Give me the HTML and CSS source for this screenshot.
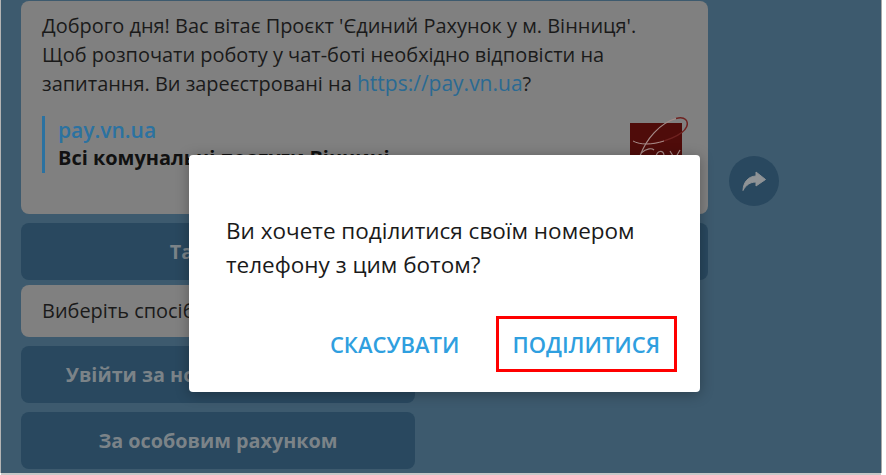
FILE: index.html
```html
<!DOCTYPE html>
<html lang="uk">
<head>
<meta charset="utf-8">
<title>Чат-бот</title>
<link rel="stylesheet" href="styles.css">
</head>
<body>
<div class="screen">
  <div class="chat">
    <div class="row">
      <div class="bubble">
        <p class="msg">Доброго дня! Вас вітає Проєкт 'Єдиний Рахунок у м. Вінниця'.<br>Щоб розпочати роботу у чат-боті необхідно відповісти на<br>запитання. Ви зареєстровані на <span class="link">https://pay.vn.ua</span>?</p>
        <div class="preview">
          <div class="preview-text">
            <div class="site">pay.vn.ua</div>
            <div class="desc">Всі комунальні послуги Вінниці</div>
          </div>
          <svg class="logo" width="58" height="40" viewBox="0 0 58 40">
            <rect x="0" y="6" width="52" height="34" fill="#4f0c0a"/>
            <path d="M46 1.500C55 -1 59 4 56.500 10C53 18 34 26 16 27" fill="none" stroke="#6f2220" stroke-width="1.500"/>
            <path d="M10 39C16 22 30 6 46 1.500" fill="none" stroke="#a58b88" stroke-width="1.200"/>
            <path d="M3 24C10 28 22 28 34 24" fill="none" stroke="#a58b88" stroke-width="1"/>
            <path d="M11 36C17 31 22 31 24 33M26 40C27 33 33 33 34 38M40 34L43 39M50 33L46 40" fill="none" stroke="#a58b88" stroke-width="1.200"/>
          </svg>
        </div>
      </div>
      <div class="share">
        <svg width="24" height="20" viewBox="0 0 24 20"><path d="M14 1L23.500 8.500L14 15V11C8 11 4 14 1 19.500C1.500 11 6 5.500 14 5Z" fill="#8f9396" stroke="#8f9396" stroke-linejoin="round"/></svg>
      </div>
    </div>
    <button class="kbd kbd-wide">Так, я зареєстрований(а) на pay.vn.ua</button>
    <div class="bubble-small">Виберіть спосіб авторизації у чат-боті</div>
    <button class="kbd kbd-half">Увійти за номером телефону</button>
    <button class="kbd kbd-half">За особовим рахунком</button>
  </div>
  <div class="modal">
    <p class="modal-text">Ви хочете поділитися своїм номером телефону з цим ботом?</p>
    <div class="actions">
      <span class="action">СКАСУВАТИ</span>
      <span class="action action-marked">ПОДІЛИТИСЯ</span>
    </div>
  </div>
</div>
</body>
</html>
```
FILE: styles.css
```css
* { box-sizing: border-box; }
html, body { margin: 0; height: 100%; background: #fff; }
body { overflow: hidden; font-family: "Open Sans", sans-serif; }
.screen {
  position: relative;
  width: 880px;
  height: 473px;
  margin-left: 1px;
  background: #3d5a6e;
  box-shadow: -1px 0 0 #b4b4b4, 1px 0 0 #a8a8a8, 0 2px 0 #c8c8c8;
}
.chat {
  display: flex;
  flex-direction: column;
  align-items: flex-start;
  height: 100%;
  padding: 1px 0 0 20px;
  overflow: hidden;
}
.row { display: flex; align-items: flex-end; }
.bubble {
  width: 687px;
  height: 213px;
  padding: 11px 21px 0;
  background: #808080;
  border-radius: 8px;
  color: #1a1a1a;
}
.msg { margin: 0; font-size: 19.950px; line-height: 28.500px; white-space: nowrap; }
.link { color: #2a6a93; font-size: 21px; }
.preview {
  display: flex;
  justify-content: space-between;
  align-items: flex-start;
  height: 57px;
  margin-top: 17px;
  padding-left: 13px;
  border-left: 3px solid #2b72a1;
}
.preview-text { line-height: 28px; font-size: 19.950px; white-space: nowrap; }
.site { color: #2b72a1; font-weight: 600; font-size: 21px; }
.desc { color: #111; font-weight: 700; }
.logo { margin: 1px -1px 0 0; }
.share {
  display: flex;
  align-items: center;
  justify-content: center;
  width: 50px;
  height: 50px;
  margin: 0 0 8px 21px;
  border-radius: 50%;
  background: #29485f;
}
.kbd {
  display: block;
  height: 57px;
  padding: 0;
  border: 0;
  border-radius: 8px;
  background: #29485f;
  color: #7b8388;
  font-family: inherit;
  font-size: 19.800px;
  font-weight: 700;
  white-space: nowrap;
  text-align: center;
}
.kbd-wide { width: 687px; margin-top: 9px; }
.kbd-half { width: 394px; margin-top: 9px; }
.bubble-small {
  width: 600px;
  height: 52px;
  margin-top: 5px;
  padding: 0 21px;
  background: #808080;
  border-radius: 8px;
  color: #1a1a1a;
  font-size: 19.950px;
  line-height: 52px;
  white-space: nowrap;
}
.modal {
  position: absolute;
  left: 188px;
  top: 155px;
  width: 511px;
  height: 237px;
  padding: 59px 37px 0;
  background: #fff;
  border-radius: 4px;
  box-shadow: 0 2px 14px rgba(0, 0, 0, 0.3);
}
.modal-text { margin: 0; font-size: 22.500px; line-height: 34px; color: #1a1a1a; }
.actions {
  display: flex;
  justify-content: flex-end;
  align-items: center;
  gap: 37px;
  margin: 34px -14px 0 0;
}
.action { font-size: 22px; font-weight: 600; color: #2f9fdf; line-height: 56px; white-space: nowrap; }
.action-marked { padding: 0 14px 0 13px; border: 3px solid #f00; line-height: 50px; }
```
